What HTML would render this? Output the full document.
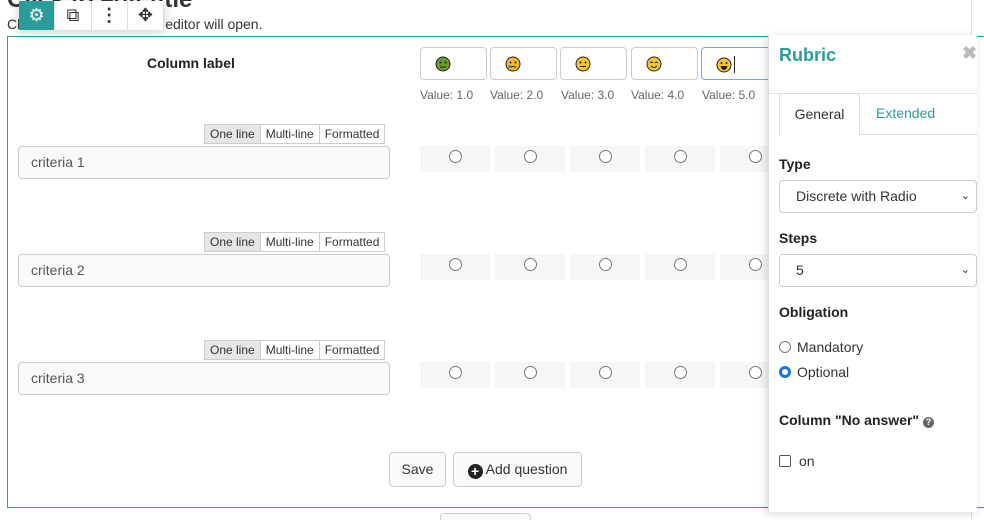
<!DOCTYPE html>
<html><head><style>
html,body{margin:0;width:984px;height:520px;overflow:hidden}
body{position:relative;background:#fff;font-family:"Liberation Sans",sans-serif;color:#333;font-size:14px}
.abs{position:absolute}
.box{left:7px;top:36px;width:990px;height:470px;border:1px solid #2a9d9a;border-right:none}
.tb{left:19px;top:1px;width:145px;height:29px;background:#fff;box-shadow:0 2px 10px rgba(0,0,0,.2);display:flex}
.tb div{width:36px;border-right:1px solid #ddd;display:flex;align-items:center;justify-content:center;font-size:18px}
.inp{left:18px;width:372px;height:33px;border:1px solid #ccc;border-radius:4px;background:#fafafa;line-height:31px;padding-left:12px;color:#555;font-size:14px;box-sizing:border-box}
.seg{left:204px;height:20px;display:flex;font-size:12px}
.seg span{border:1px solid #ccc;border-left:none;padding:0 5px;line-height:19px;background:#fff}
.seg span:first-child{border-left:1px solid #ccc;background:#e6e6e6}
.cell{width:70px;height:26px;background:#f6f6f6;text-align:center}
.rad{display:inline-block;width:11px;height:11px;border:1px solid #777;border-radius:50%;margin-top:4px;background:#fff}
.emo{top:47px;width:67px;height:33px;border:1px solid #ccc;border-radius:4px;padding:8px 0 0 14px;box-sizing:border-box}
.val{top:88px;font-size:12px;color:#666}
.btn{border:1px solid #ccc;border-radius:4px;height:33px;line-height:33px;background:#fafafa;font-size:14px;text-align:center}
.panel{left:768px;top:35px;width:208px;height:477px;background:#fff;box-shadow:-2px 2px 8px rgba(0,0,0,.15);border-left:1px solid #ddd}
.lbl{font-weight:bold;font-size:14px;color:#222}
.sel{left:10px;width:198px;height:33px;border:1px solid #ccc;border-radius:4px;line-height:31px;padding-left:16px;box-sizing:border-box;font-size:14px}
</style></head><body>
<div class="abs" style="left:7px;top:-14px;font-size:24px;font-weight:bold">Click to edit title</div>
<div class="abs" style="left:7px;top:16px;font-size:14px">Click here and the HTML editor will open.</div>
<div class="abs" style="left:971px;top:0;width:1px;height:520px;background:#ddd"></div>
<div class="abs box"></div>
<div class="abs tb"><div style="background:#2a9d9a;color:#fff">⚙</div><div>⧉</div><div style="font-weight:bold">⋮</div><div>✥</div></div>
<div class="abs lbl" style="left:147px;top:55px">Column label</div>

<div class="abs emo" style="left:420px"><svg width="16" height="16"><circle cx="8" cy="8" r="7" fill="#6a9a2a" stroke="#222"/><circle cx="5.5" cy="6.5" r="1" fill="#222"/><circle cx="10.5" cy="6.5" r="1" fill="#222"/><path d="M5 11h6" stroke="#222"/></svg></div>
<div class="abs emo" style="left:490px"><svg width="16" height="16"><circle cx="8" cy="8" r="7" fill="#f5b731" stroke="#222"/><circle cx="5.5" cy="6.5" r="1" fill="#222"/><circle cx="10.5" cy="6.5" r="1" fill="#222"/><path d="M5 11.5q3-2 6 0" stroke="#222" fill="none"/><path d="M4.5 9v3" stroke="#3a8fdc" stroke-width="2"/></svg></div>
<div class="abs emo" style="left:560px"><svg width="16" height="16"><circle cx="8" cy="8" r="7" fill="#f5c431" stroke="#222"/><circle cx="5.5" cy="6.5" r="1" fill="#222"/><circle cx="10.5" cy="6.5" r="1" fill="#222"/><path d="M5 10.5h6" stroke="#222"/></svg></div>
<div class="abs emo" style="left:631px"><svg width="16" height="16"><circle cx="8" cy="8" r="7" fill="#f5c431" stroke="#222"/><path d="M4 7q1.5-2 3 0M9 7q1.5-2 3 0" stroke="#222" fill="none"/><path d="M5 10q3 3 6 0" stroke="#222" fill="none"/></svg></div>
<div class="abs emo" style="left:701px;border-color:#66aee6;width:70px"><svg width="16" height="16"><circle cx="8" cy="8" r="7" fill="#f5c431" stroke="#222"/><circle cx="5.5" cy="6" r="1" fill="#222"/><circle cx="10.5" cy="6" r="1" fill="#222"/><path d="M4.5 9h7q-1 4-3.5 4t-3.5-4z" fill="#222"/></svg><span style="display:inline-block;width:1px;height:17px;background:#222;margin-left:2px"></span></div>
<div class="abs val" style="left:420px">Value: 1.0</div>
<div class="abs val" style="left:490px">Value: 2.0</div>
<div class="abs val" style="left:561px">Value: 3.0</div>
<div class="abs val" style="left:631px">Value: 4.0</div>
<div class="abs val" style="left:702px">Value: 5.0</div>

<div class="abs seg" style="top:124px"><span>One line</span><span>Multi-line</span><span>Formatted</span></div>
<div class="abs inp" style="top:146px">criteria 1</div>
<div class="abs" style="left:420px;top:146px;display:flex;gap:5px"><div class="cell"><span class="rad"></span></div><div class="cell"><span class="rad"></span></div><div class="cell"><span class="rad"></span></div><div class="cell"><span class="rad"></span></div><div class="cell"><span class="rad"></span></div></div>
<div class="abs seg" style="top:232px"><span>One line</span><span>Multi-line</span><span>Formatted</span></div>
<div class="abs inp" style="top:254px">criteria 2</div>
<div class="abs" style="left:420px;top:254px;display:flex;gap:5px"><div class="cell"><span class="rad"></span></div><div class="cell"><span class="rad"></span></div><div class="cell"><span class="rad"></span></div><div class="cell"><span class="rad"></span></div><div class="cell"><span class="rad"></span></div></div>
<div class="abs seg" style="top:340px"><span>One line</span><span>Multi-line</span><span>Formatted</span></div>
<div class="abs inp" style="top:362px">criteria 3</div>
<div class="abs" style="left:420px;top:362px;display:flex;gap:5px"><div class="cell"><span class="rad"></span></div><div class="cell"><span class="rad"></span></div><div class="cell"><span class="rad"></span></div><div class="cell"><span class="rad"></span></div><div class="cell"><span class="rad"></span></div></div>

<div class="abs btn" style="left:389px;top:452px;width:55px">Save</div>
<div class="abs btn" style="left:453px;top:452px;width:127px"><span style="display:inline-block;width:15px;height:15px;border-radius:50%;background:#222;color:#fff;font-size:14px;line-height:15px;font-weight:bold;vertical-align:-2px">+</span> Add question</div>
<div class="abs btn" style="left:440px;top:513px;width:89px;height:20px"></div>

<div class="abs panel">
<div class="abs" style="left:10px;top:10px;font-size:18px;color:#2a9d9a;font-weight:bold">Rubric</div>
<div class="abs" style="left:193px;top:8px;font-size:18px;color:#bbb;font-weight:bold">✖</div>
<div class="abs" style="left:0;top:58px;width:208px;height:1px;background:#e5e5e5"></div>
<div class="abs" style="left:10px;top:99px;width:198px;height:1px;background:#ddd"></div>
<div class="abs" style="left:10px;top:58px;width:79px;height:41px;border:1px solid #ddd;border-bottom:1px solid #fff;border-radius:4px 4px 0 0;background:#fff;text-align:center;line-height:40px">General</div>
<div class="abs" style="left:107px;top:70px;color:#2a9d9a">Extended</div>
<div class="abs lbl" style="left:10px;top:121px">Type</div>
<div class="abs sel" style="top:145px">Discrete with Radio<span style="float:right;margin-right:6px;font-size:11px">⌄</span></div>
<div class="abs lbl" style="left:10px;top:195px">Steps</div>
<div class="abs sel" style="top:219px">5<span style="float:right;margin-right:6px;font-size:11px">⌄</span></div>
<div class="abs lbl" style="left:10px;top:269px">Obligation</div>
<div class="abs" style="left:10px;top:304px"><span class="rad" style="width:10px;height:10px;vertical-align:-1px;margin:0 6px 0 0"></span>Mandatory</div>
<div class="abs" style="left:10px;top:329px"><span class="rad" style="width:6px;height:6px;border:3px solid #1a73e8;vertical-align:-1px;margin:0 6px 0 0"></span>Optional</div>
<div class="abs lbl" style="left:10px;top:377px">Column "No answer" <span style="display:inline-block;width:11px;height:11px;border-radius:50%;background:#666;color:#fff;font-size:9px;text-align:center;line-height:11px">?</span></div>
<div class="abs" style="left:10px;top:418px"><span style="display:inline-block;width:10px;height:10px;border:1px solid #555;border-radius:2px;vertical-align:-1px;margin-right:8px"></span>on</div>
</div>
</body></html>
